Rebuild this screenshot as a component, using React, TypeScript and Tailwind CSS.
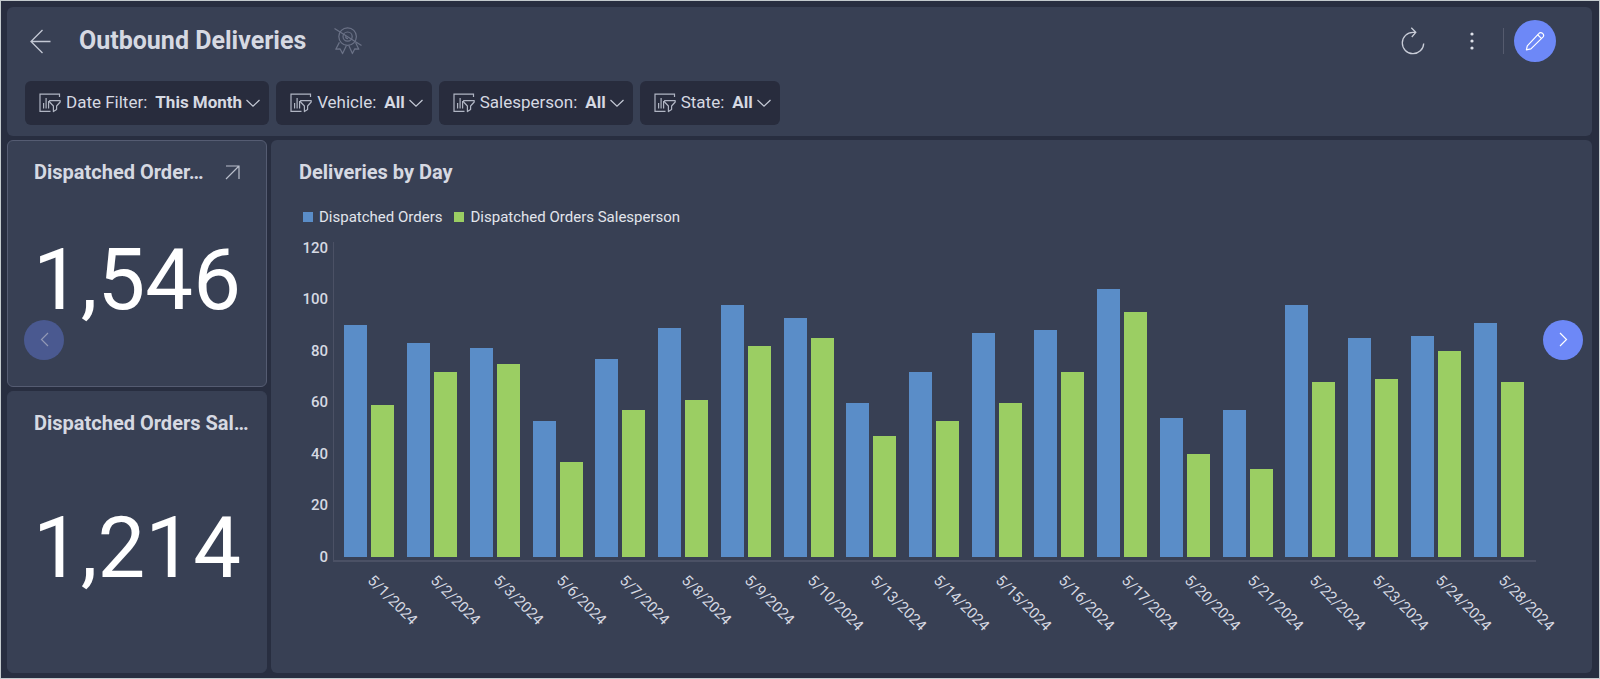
import type { ReactNode } from "react";

type Day = { date: string; orders: number; salesperson: number };

const days: Day[] = [
  { date: "5/1/2024", orders: 90, salesperson: 59 },
  { date: "5/2/2024", orders: 83, salesperson: 72 },
  { date: "5/3/2024", orders: 81, salesperson: 75 },
  { date: "5/6/2024", orders: 53, salesperson: 37 },
  { date: "5/7/2024", orders: 77, salesperson: 57 },
  { date: "5/8/2024", orders: 89, salesperson: 61 },
  { date: "5/9/2024", orders: 98, salesperson: 82 },
  { date: "5/10/2024", orders: 93, salesperson: 85 },
  { date: "5/13/2024", orders: 60, salesperson: 47 },
  { date: "5/14/2024", orders: 72, salesperson: 53 },
  { date: "5/15/2024", orders: 87, salesperson: 60 },
  { date: "5/16/2024", orders: 88, salesperson: 72 },
  { date: "5/17/2024", orders: 104, salesperson: 95 },
  { date: "5/20/2024", orders: 54, salesperson: 40 },
  { date: "5/21/2024", orders: 57, salesperson: 34 },
  { date: "5/22/2024", orders: 98, salesperson: 68 },
  { date: "5/23/2024", orders: 85, salesperson: 69 },
  { date: "5/24/2024", orders: 86, salesperson: 80 },
  { date: "5/28/2024", orders: 91, salesperson: 68 },
];

const axisMax = 120;
const ticks = [120, 100, 80, 60, 40, 20, 0];

const filters = [
  { id: "date", label: "Date Filter:", value: "This Month" },
  { id: "vehicle", label: "Vehicle:", value: "All" },
  { id: "salesperson", label: "Salesperson:", value: "All" },
  { id: "state", label: "State:", value: "All" },
];

function FilterIcon() {
  return (
    <svg width="22" height="20" viewBox="0 0 22 20" fill="none" stroke="#b0b5c3" strokeWidth="1.2" aria-hidden="true">
      <path d="M20.5 4V1.2H1V18.4H11.5" />
      <path d="M4.6 15.5V10M7.1 15.5V5M9.6 15.5V8" />
      <path d="M10.6 7.6H21.2V9L17.6 13V16.6L14.4 18.6V13L10.6 9Z" strokeLinejoin="round" />
    </svg>
  );
}

function Chevron() {
  return (
    <svg width="14" height="9" viewBox="0 0 14 9" fill="none" stroke="#c5cad6" strokeWidth="1.2" className="pointer-events-none" aria-hidden="true">
      <path d="M0.5 1L7 7.2L13.5 1" />
    </svg>
  );
}

function MedalOffIcon() {
  return (
    <svg width="28" height="28" viewBox="0 0 28 28" fill="none" stroke="#6b7287" strokeWidth="1.2" strokeLinejoin="round" aria-hidden="true">
      <circle cx="13.6" cy="9.6" r="8.8" />
      <circle cx="13.6" cy="9.6" r="4.6" />
      <path d="M11.6 9.2C11.6 10.8 12.4 11.6 14 11.6" />
      <path d="M5.4 15.4L1.8 22.2L6 21.8L8.6 26.6L12.4 18.6" />
      <path d="M21.6 15.4L24.8 22.2L20.8 21.8L18.4 26.6L14.8 18.6" />
      <path d="M0.5 1.4L27.5 18.4" />
    </svg>
  );
}

function RoundButton({ label, className, children }: { label: string; className: string; children: ReactNode }) {
  return (
    <button type="button" aria-label={label} className={`flex items-center justify-center rounded-full ${className}`}>
      {children}
    </button>
  );
}

function Header() {
  return (
    <header className="rounded-md bg-[#384054] px-[18px] pt-[13px] pb-[11px]">
      <div className="flex h-[42px] items-center">
        <button type="button" aria-label="Back" className="ml-[5px]">
          <svg width="21" height="25" viewBox="0 0 21 25" fill="none" stroke="#c3c8d4" strokeWidth="1.3" aria-hidden="true">
            <path d="M12.5 1L1 12.5L12.5 24M1 12.5H20.5" />
          </svg>
        </button>
        <h1 className="ml-7 text-[25px] leading-8 font-bold">Outbound Deliveries</h1>
        <span className="ml-7">
          <MedalOffIcon />
        </span>
        <div className="ml-auto flex items-center pr-[18px]">
          <button type="button" aria-label="Refresh">
            <svg width="24" height="28" viewBox="0 0 24 28" fill="none" stroke="#c9cdd8" strokeWidth="1.3" aria-hidden="true">
              <path d="M14.5 5.3H12A10.7 10.7 0 1 0 22.7 16.4M10.3 0.8L14.8 5.3L10.8 10" />
            </svg>
          </button>
          <button type="button" aria-label="More options" className="ml-11">
            <svg width="6" height="20" viewBox="0 0 6 20" fill="#dfe2ea" aria-hidden="true">
              <circle cx="3" cy="3" r="1.6" />
              <circle cx="3" cy="10" r="1.6" />
              <circle cx="3" cy="17" r="1.6" />
            </svg>
          </button>
          <span className="ml-7 h-[26px] w-px bg-[#555b6e]" />
          <RoundButton label="Edit" className="ml-[10px] size-[42px] bg-[#6d88f7]">
            <svg width="20" height="20" viewBox="0 0 20 20" fill="none" stroke="#ffffff" strokeWidth="1.2" strokeLinejoin="round" aria-hidden="true">
              <path d="M1.4 18.8L2.3 14.8L14 2.4C14.9 1.4 16.4 1.4 17.4 2.3L17.8 2.7C18.8 3.7 18.8 5.1 17.9 6.1L5.9 17.9Z" />
              <path d="M12.6 3.8L16.6 7.6" />
            </svg>
          </RoundButton>
        </div>
      </div>
      <div className="mt-[19px] flex flex-wrap gap-[7px] text-[17px]">
        {filters.map((f) => (
          <label key={f.id} htmlFor={f.id} className="flex h-11 items-center rounded-md bg-[#282c3d] pr-[9px] pl-3.5">
            <FilterIcon />
            <span className="ml-[5px]">{f.label}</span>
            <select id={f.id} defaultValue={f.value} className="field-sizing-content ml-2 appearance-none bg-transparent font-bold outline-none">
              <option>{f.value}</option>
            </select>
            <span className="ml-1">
              <Chevron />
            </span>
          </label>
        ))}
      </div>
    </header>
  );
}

function Kpi({ title, value, className, action }: { title: string; value: string; className: string; action?: ReactNode }) {
  return (
    <section className={`flex min-h-0 basis-0 flex-col rounded-md border bg-[#384054] ${className}`}>
      <div className="flex items-center pt-[17px] pr-4 pl-[26px]">
        <h2 className="min-w-0 flex-1 text-[20px] leading-7 font-bold whitespace-nowrap">{title}</h2>
        {action}
      </div>
      <div className="flex flex-1 items-center justify-center pb-3 text-[85px] leading-none text-white">{value}</div>
    </section>
  );
}

function LegendItem({ color, label }: { color: string; label: string }) {
  return (
    <li className="flex items-center gap-1.5">
      <span className={`size-2.5 ${color}`} />
      {label}
    </li>
  );
}

function Bar({ value, color }: { value: number; color: string }) {
  return (
    <div className="flex w-[23px] flex-col">
      <div className="basis-0" style={{ flexGrow: axisMax - value }} />
      <div className={`basis-0 ${color}`} style={{ flexGrow: value }} />
    </div>
  );
}

function DeliveriesChart() {
  return (
    <section className="flex min-w-0 flex-1 flex-col rounded-md bg-[#384054] pr-14 pl-7">
      <h2 className="pt-[18px] text-[20px] leading-7 font-bold">Deliveries by Day</h2>
      <ul className="mt-[19px] flex gap-3 pl-1 text-[15px] leading-6 text-[#e2e5ec]">
        <LegendItem color="bg-[#5a8dc8]" label="Dispatched Orders" />
        <LegendItem color="bg-[#9bce63]" label="Dispatched Orders Salesperson" />
      </ul>
      <div className="mt-[13px] flex min-h-40 flex-1 text-[15px]">
        <div className="flex w-[29px] flex-col justify-between pt-1.5 pb-[5px] text-right font-medium">
          {ticks.map((t) => (
            <span key={t} className="flex h-0 items-center justify-end">
              {t}
            </span>
          ))}
        </div>
        <div className="ml-[5px] flex flex-1 border-b-2 border-l border-b-[#4b5165] border-l-[#4b5165] pt-1.5 pr-1.5 pb-[3px] pl-1">
          {days.map((d) => (
            <div key={d.date} className="flex min-w-0 flex-1 justify-center gap-1">
              <Bar value={d.orders} color="bg-[#5a8dc8]" />
              <Bar value={d.salesperson} color="bg-[#9bce63]" />
            </div>
          ))}
        </div>
      </div>
      <div className="flex h-[111px] pt-[10px] pr-1.5 pl-[38px] text-[15px] leading-4">
        {days.map((d) => (
          <div key={d.date} className="min-w-0 flex-1">
            <span className="ml-[50%] block w-max origin-top-left translate-x-2 rotate-45">{d.date}</span>
          </div>
        ))}
      </div>
    </section>
  );
}

export default function App() {
  return (
    <div className="relative flex min-h-screen flex-col gap-1 border border-[#c3cacd] bg-[#282e40] pt-[6px] pr-[7px] pb-[5px] pl-[6px] font-[Roboto,sans-serif] text-[#d6d9e2]">
      <Header />
      <main className="flex flex-1 gap-1">
        <div className="flex w-[260px] flex-col gap-1">
          <Kpi
            title="Dispatched Order…"
            value="1,546"
            className="grow-[7] border-[#555c72]"
            action={
              <button type="button" aria-label="Open Dispatched Orders" className="mr-[10px]">
                <svg width="15" height="15" viewBox="0 0 15 15" fill="none" stroke="#b9becb" strokeWidth="1.2" aria-hidden="true">
                  <path d="M1 1H14V14M14 1L1 14" />
                </svg>
              </button>
            }
          />
          <Kpi title="Dispatched Orders Sal…" value="1,214" className="grow-[8] border-[#384054]" />
        </div>
        <DeliveriesChart />
      </main>
      <RoundButton label="Previous dashboard" className="absolute top-1/2 left-[23px] size-10 -translate-y-1/2 bg-[#4a5990]">
        <svg width="9" height="15" viewBox="0 0 9 15" fill="none" stroke="#9299b5" strokeWidth="1.2" aria-hidden="true">
          <path d="M8 1L1.5 7.5L8 14" />
        </svg>
      </RoundButton>
      <RoundButton label="Next dashboard" className="absolute top-1/2 right-4 size-10 -translate-y-1/2 bg-[#6d88f7]">
        <svg width="9" height="15" viewBox="0 0 9 15" fill="none" stroke="#ffffff" strokeWidth="1.2" aria-hidden="true">
          <path d="M1 1L7.5 7.5L1 14" />
        </svg>
      </RoundButton>
    </div>
  );
}
